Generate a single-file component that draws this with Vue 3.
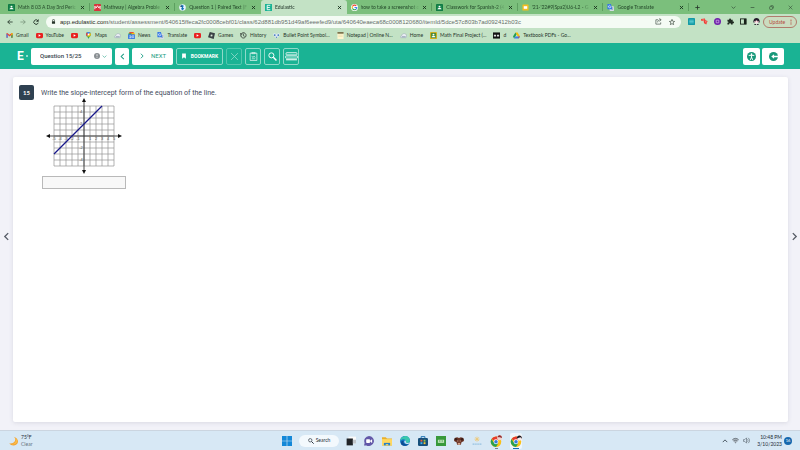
<script setup>
import { ref } from 'vue'

const icons = {
  classroom: '<rect width="16" height="16" rx="1" fill="#0f7a45"/><rect x="2" y="2" width="12" height="12" fill="#18864b"/><circle cx="8" cy="6" r="2.2" fill="#fff"/><path d="M3.5 12c0-4 9-4 9 0z" fill="#fff"/>',
  classroomGold: '<rect width="16" height="16" rx="1" fill="#e0b31c"/><rect x="2" y="2" width="12" height="12" fill="#4b8b3b"/><circle cx="8" cy="6" r="2.2" fill="#fff"/><path d="M3.5 12c0-4 9-4 9 0z" fill="#fff"/>',
  mathway: '<rect width="16" height="16" rx="2" fill="#d8343c"/><path d="M2 12V5l3 4 3-5 3 5 3-4v7" fill="none" stroke="#fff" stroke-width="2"/>',
  paired: '<circle cx="8" cy="8" r="7.500" fill="#e9f5ff"/><path d="M5 1l6 3-2 4 3 3-5 4-2-5 2-3z" fill="#1773b9"/><circle cx="5" cy="5" r="2" fill="#174a74"/>',
  edulastic: '<rect width="16" height="16" fill="#1ab394"/><path d="M12 3H5v10h7M5 8h6" fill="none" stroke="#fff" stroke-width="2"/>',
  google: '<circle cx="8" cy="8" r="8" fill="#fff"/><g fill="none" stroke-width="2.500"><path d="M12 4.300A5.300 5.300 0 0 0 3.400 5.500" stroke="#ea4335"/><path d="M3.400 5.500a5.300 5.300 0 0 0 0 5" stroke="#fbbc05"/><path d="M3.400 10.500a5.300 5.300 0 0 0 8.300 1.300" stroke="#34a853"/><path d="M11.700 11.800A5 5 0 0 0 13.300 8H8" stroke="#4285f4"/></g>',
  slides: '<rect x="1" y="1" width="14" height="14" rx="1" fill="#f5bd1f"/><rect x="4" y="5" width="8" height="6" fill="#fff"/>',
  translate: '<rect x="6" y="5" width="10" height="11" rx="1" fill="#d5dde8"/><path d="M9 9h6M12 8c0 3-2 4-3 5M10 10c1 2 3 3 4 3" stroke="#607d8b" fill="none"/><path d="M1 0h8l3 12H1z" fill="#3577e5"/><path d="M8 4.500A2.700 2.700 0 1 0 8.500 6.500H6" stroke="#fff" fill="none" stroke-width="1.400"/>',
  gmail: '<path d="M1 3v10h3V7l4 3 4-3v6h3V3l-2-1-5 4-5-4z" fill="#ea4335"/><path d="M1 4v9h3V6z" fill="#4285f4"/><path d="M15 4v9h-3V6z" fill="#34a853"/><path d="M12 3l3-1v4l-3 2z" fill="#fbbc04"/>',
  youtube: '<rect y="2" width="16" height="12" rx="3" fill="#e8201f"/><path d="M6 5l5 3-5 3z" fill="#fff"/>',
  maps: '<path d="M8 0a5.500 5.500 0 0 0-5.500 5.500C2.500 10 7 11 8 16c1-5 5.500-6 5.500-10.500A5.500 5.500 0 0 0 8 0z" fill="#34a853"/><path d="M8 0a5.500 5.500 0 0 1 5 3L4 10C2 7 1 0 8 0z" fill="#4285f4"/><path d="M2.500 6c0-3 1-4 2-5l3 4-4 4z" fill="#ea4335"/><path d="M4 10l6-7 3 0c1 3 0 5-2 7z" fill="#fbbc04"/><circle cx="8" cy="5.500" r="2" fill="#fff"/>',
  cloud: '<path d="M2 13c-2-3 0-5 2-5 1-5 8-6 10-2 2 3 1 7-1 7z" fill="#e9edf3" stroke="#8e9cab"/><path d="M4 11h9" stroke="#8293a8" stroke-width="2"/>',
  news: '<rect x="3" y="0" width="10" height="8" fill="#ea4335"/><rect x="1" y="3" width="8" height="8" fill="#34a853"/><rect x="8" y="2" width="7" height="8" fill="#fbbc04"/><rect y="5" width="16" height="11" rx="1" fill="#3f7de0"/><path d="M3 9h4v4H3M9 9h5M9 12h5" stroke="#fff" fill="none" stroke-width="1.500"/>',
  roblox: '<path d="M4 0l12 3-3 13-13-4z" fill="#3b4145"/><path d="M6.500 5.500l4 1-1 4-4-1z" fill="#d9e8d9"/>',
  history: '<path d="M2.500 5A6 6 0 1 1 2 9" fill="none" stroke="#333a35" stroke-width="2"/><path d="M0 3l1 5 4-2zM8 4v5l3 1" fill="none" stroke="#333a35" stroke-width="1.500"/>',
  bullet: '<path d="M1 4c3-3 5 1 7 1s4-4 7-1c2 4-4 8-7 10C5 12-1 8 1 4z" fill="#dfeaf7"/><circle cx="4" cy="7" r="2" fill="#3d75b9"/><circle cx="12" cy="7" r="2" fill="#3d75b9"/><path d="M6 11h4l-2 3z" fill="#3d75b9"/>',
  notepad: '<rect x="1" y="1" width="14" height="15" fill="#fff6cf"/><rect x="1" y="0" width="14" height="4" fill="#7c744f"/><path d="M3 7h10M3 10h10" stroke="#ddd09a"/>',
  black: '<rect y="1" width="16" height="14" fill="#111"/><path d="M2 6h5v4H2zM9 6h5v4H9z" fill="#ddd"/>',
  drive: '<path d="M5.500 1h5l5.500 9h-5z" fill="#fbbc04"/><path d="M5.500 1L0 10l2.500 5L8 5.500z" fill="#229c54"/><path d="M5 10h11l-3 5H2.500z" fill="#3f7de8"/><path d="M13 15l3-5h-4z" fill="#e34133"/>',
  windows: '<path d="M0 0h7.500v7.500H0zM8.500 0H16v7.500H8.500zM0 8.500h7.500V16H0zM8.500 8.500H16V16H8.500z" fill="#1488d8"/>',
  taskview: '<rect x="4" y="1" width="12" height="11" fill="#fafafa"/><rect x="1" y="4" width="10" height="11" fill="#202327"/><path d="M11 12h5V6h-5z" fill="#c0c5ca"/>',
  chat: '<path d="M8 0a8 8 0 1 1-4 15H0l1-4A8 8 0 0 1 8 0z" fill="#6258a8"/><rect x="3.500" y="5" width="6" height="6" rx="1" fill="#fff"/><path d="M10 7l3-2v6l-3-2z" fill="#fff"/>',
  folder: '<path d="M0 2h6l2 2h8v11H0z" fill="#eab02b"/><path d="M0 5h16v10H0z" fill="#ffd861"/><path d="M3 11h10v4H3z" fill="#2580c8"/><path d="M6 13h4v2H6z" fill="#ffd861"/>',
  edge: '<circle cx="8" cy="8" r="8" fill="#1478c6"/><path d="M0 8C1-2 15-3 16 7c0 4-5 5-7 3 2-5-5-7-9-2z" fill="#39c7ae"/><path d="M6 8c-2 3 1 7 8 5-3 3-9 4-12 0C1 9 3 7 6 8z" fill="#0c4c92"/><path d="M7 8c2-2 3 0 2 2 2 2 5 1 7 0l-1 2c-4 2-9 0-8-4z" fill="#d8ebf7"/>',
  store: '<path d="M5 4V1h6v3" fill="none" stroke="#176eb0" stroke-width="1.500"/><rect y="3" width="16" height="13" rx="2" fill="#174f7b"/><path d="M4 6h3v3H4z" fill="#f15c3d"/><path d="M9 6h3v3H9z" fill="#8fc642"/><path d="M4 10h3v3H4z" fill="#40b4ed"/><path d="M9 10h3v3H9z" fill="#fbc52e"/>',
  xbox: '<rect width="16" height="16" fill="#38993b"/><path d="M3 6h10v5H3z" fill="#bde3b7"/><path d="M5 8h2M9 8h2" stroke="#38993b" stroke-width="1.500"/>',
  bear: '<path d="M1 3l4-1 3 1 3-1 4 1 1 5-4 2-1 4H5l-1-4-4-2z" fill="#6d3526"/><circle cx="3" cy="5" r="2" fill="#3b1d18"/><circle cx="13" cy="5" r="2" fill="#3b1d18"/><path d="M5 8h2M9 8h2" stroke="#ead2c2"/><path d="M6 11h4v3H6z" fill="#d5a68d"/>',
  sun: '<path d="M8 1v8M4 5h8M5 2l6 6M11 2L5 8" stroke="#efc66e" stroke-width="1.200"/><path d="M1 13h14" stroke="#8ebcdc" stroke-width="2" stroke-dasharray="2 1"/>',
  chrome: '<circle cx="8" cy="9" r="7" fill="#fbc116"/><path d="M8 9L2 5.400A7 7 0 0 1 14.500 6.500H8z" fill="#e63c2f"/><path d="M2 5.400A7 7 0 0 0 8 16l3-5-3-2-3 1z" fill="#2aa050"/><circle cx="8" cy="9" r="3.200" fill="#fff"/><circle cx="8" cy="9" r="2.400" fill="#367bdf"/><circle cx="13" cy="3.500" r="3.500" fill="#f2d3cc"/><path d="M10 3c1-4 6-3 6 1l-3-1z" fill="#8f2b30"/>',
  chromeDark: '<circle cx="8" cy="9" r="7" fill="#fbc116"/><path d="M8 9L2 5.400A7 7 0 0 1 14.500 6.500H8z" fill="#e63c2f"/><path d="M2 5.400A7 7 0 0 0 8 16l3-5-3-2-3 1z" fill="#2aa050"/><circle cx="8" cy="9" r="3.200" fill="#fff"/><circle cx="8" cy="9" r="2.400" fill="#367bdf"/><circle cx="13" cy="4" r="3.500" fill="#f5e8e8"/><path d="M9 5c0-6 7-6 7 0l-2-2-3 1z" fill="#17151c"/>',
  close: '<path d="M3 3l10 10M13 3L3 13" stroke="currentColor" stroke-width="2.800"/>',
  thinClose: '<path d="M2 2l12 12M14 2L2 14" stroke="currentColor" stroke-width="1.500"/>',
  plus: '<path d="M8 1v14M1 8h14" stroke="currentColor" stroke-width="2.600"/>',
  down: '<path d="M2 5l6 6 6-6" fill="none" stroke="currentColor" stroke-width="1.800"/>',
  up: '<path d="M2 11l6-6 6 6" fill="none" stroke="currentColor" stroke-width="2"/>',
  left: '<path d="M11 2L5 8l6 6" fill="none" stroke="currentColor" stroke-width="2.400"/>',
  right: '<path d="M5 2l6 6-6 6" fill="none" stroke="currentColor" stroke-width="2.400"/>',
  minimize: '<path d="M2 8h12" stroke="currentColor" stroke-width="1.800"/>',
  restore: '<rect x="2" y="5" width="9" height="9" rx="2" fill="none" stroke="currentColor" stroke-width="1.600"/><path d="M5 2h6q3 0 3 3v6" fill="none" stroke="currentColor" stroke-width="1.600"/>',
  back: '<path d="M15 8H2M8 2L2 8l6 6" fill="none" stroke="currentColor" stroke-width="2.200"/>',
  forward: '<path d="M1 8h13M8 2l6 6-6 6" fill="none" stroke="currentColor" stroke-width="1.800"/>',
  reload: '<path d="M13 4.500A6 6 0 1 0 14 10" fill="none" stroke="currentColor" stroke-width="2.400"/><path d="M15 0v7H8z" fill="currentColor"/>',
  lock: '<rect x="3" y="7" width="10" height="8" rx="1" fill="currentColor"/><path d="M5 7V4a3 3 0 0 1 6 0v3" fill="none" stroke="currentColor" stroke-width="2"/>',
  share: '<path d="M7 4H2v10h11v-4M6 10c0-4 3-6 7-6M10 1l4 3-4 4" fill="none" stroke="currentColor" stroke-width="1.300"/>',
  star: '<path d="M8 1l2 5 5 .5-4 3.500 1.300 5L8 12.300 3.700 15 5 10 1 6.500 6 6z" fill="none" stroke="currentColor" stroke-width="1.600"/>',
  extTeal: '<rect width="16" height="16" rx="1" fill="#149aa5"/><path d="M3 5h10M3 8h10M3 11h10" stroke="#73dce0" stroke-width="1.500"/>',
  extRed: '<path d="M0 2l9-1 1 4 5 2-3 8-5-3-1-6-5 1z" fill="#ed3b35"/><path d="M3 4h5M5 4v4M9 8h3l-1 4" stroke="#ffb8ac" fill="none"/>',
  extPurple: '<circle cx="8" cy="8" r="8" fill="#6e20aa"/><path d="M5 5h6v6H5z" fill="none" stroke="#dfbff2" stroke-width="1.500"/>',
  puzzle: '<path d="M1 4h4c-1-4 5-4 4 0h4v4c4-1 4 5 0 4v3H9c1-4-5-4-4 0H1v-4c3 1 3-4 0-3z" fill="#202b22"/>',
  panel: '<rect x="1" y="2" width="13" height="12" fill="none" stroke="#172019" stroke-width="2"/><path d="M9 2h5v12H9z" fill="#172019"/>',
  avatar: '<path d="M1 10C-1-3 17-3 15 10z" fill="#231a29"/><path d="M3 7c2 1 4-2 5-2s3 3 5 2c1 8-11 8-10 0z" fill="#fbe9ec"/><circle cx="5.500" cy="8.500" r="1" fill="#a02f45"/><circle cx="10.500" cy="8.500" r="1" fill="#a02f45"/><path d="M3 16c0-3 3-3 5-1 2-2 5-2 5 1z" fill="#1d1b25"/><path d="M6 13h4l-2 3z" fill="#fbe9ec"/>',
  dots: '<circle cx="8" cy="3" r="1.600" fill="currentColor"/><circle cx="8" cy="8" r="1.600" fill="currentColor"/><circle cx="8" cy="13" r="1.600" fill="currentColor"/>',
  info: '<circle cx="8" cy="8" r="8" fill="#898e92"/><path d="M8 3v6M8 11v2" stroke="#fff" stroke-width="2"/>',
  ribbon: '<path d="M3 1h10v14l-5-4-5 4z" fill="currentColor"/>',
  clipboard: '<path d="M2 2h12v13H2z" fill="none" stroke="currentColor" stroke-width="1.200"/><path d="M5 1h6v2H5zM5 7l2 3 2-3 2 3M5 12h6" fill="none" stroke="currentColor"/>',
  magnify: '<circle cx="6" cy="6" r="4.500" fill="none" stroke="currentColor" stroke-width="1.700"/><path d="M9.500 9.500L15 15" stroke="currentColor" stroke-width="2.600"/>',
  lines: '<rect x="2" y="1" width="20" height="4" rx="1" fill="none" stroke="currentColor" stroke-width="1.500"/><rect x="1" y="7" width="22" height="4" rx="1" fill="none" stroke="currentColor" stroke-width="1.500"/><path d="M2 14h20" stroke="currentColor" stroke-width="2"/>',
  person: '<circle cx="8" cy="8" r="8" fill="#169879"/><circle cx="8" cy="3.800" r="1.500" fill="#fff"/><path d="M3 6l10 0M8 6v4M8 9l-2 5M8 9l2 5" stroke="#fff" stroke-width="1.700"/>',
  exit: '<circle cx="8" cy="8" r="8" fill="#169879"/><path d="M4 8l5-4v2.500h7v3H9V12z" fill="#fff"/>',
  moon: '<path d="M9 1c5 3 3 12-7 11 4 5 13 4 14-3 0-4-3-7-7-8z" fill="#f2a22e"/><path d="M11 3c4 5-1 10-6 10 5 2 10-1 10-5 0-2-2-4-4-5z" fill="#f9bc4c"/>',
  wifi: '<path d="M0 6c5-5 11-5 16 0l-8 9z" fill="#a9b3bc"/><path d="M1 6c4-4 10-4 14 0M4 9c3-2 5-2 8 0M7 13h2" fill="none" stroke="#4e5961" stroke-width="1.300"/>',
  sound: '<path d="M1 6h3l4-4v12l-4-4H1zM10 5c2 2 2 4 0 6M12 2c4 4 4 8 0 12" fill="none" stroke="#4e5961" stroke-width="1.300"/>'
}

const tabs = [
  { icon: 'classroom', text: 'Math 8 03 A Day 3rd Peric' },
  { icon: 'mathway', text: 'Mathway | Algebra Proble' },
  { icon: 'paired', text: 'Question 1 | Paired Text (F' },
  { icon: 'edulastic', text: 'Edulastic', active: true },
  { icon: 'google', text: 'how to take a screenshot o' },
  { icon: 'classroom', text: 'Classwork for Spanish-2 (4' },
  { icon: 'slides', text: "'21-'22#9(Spa2)U6-L2 - G" },
  { icon: 'translate', text: 'Google Translate' }
]
const bookmarks = [
  ['gmail', 'Gmail'], ['youtube', 'YouTube'], ['youtube', ''], ['maps', 'Maps'], ['cloud', ''],
  ['news', 'News'], ['translate', 'Translate'], ['youtube', ''], ['roblox', 'Games'], ['history', 'History'],
  ['bullet', 'Bullet Point Symbol...'], ['notepad', 'Notepad | Online N...'], ['cloud', 'Home'],
  ['classroomGold', 'Math Final Project (...'], ['black', 'd'], ['drive', 'Textbook PDFs - Go...']
]
const windowButtons = [['down', 'Tab search'], ['minimize', 'Minimize'], ['restore', 'Restore'], ['thinClose', 'Close window']]
const extensions = ['extTeal', 'extRed', 'extPurple', 'puzzle', 'panel', 'avatar']
const tools = [['thinClose', 'Cross out'], ['clipboard', 'Calculator'], ['magnify', 'Magnify'], ['lines', 'Line reader']]
const apps = ['taskview', 'chat', 'folder', 'edge', 'store', 'xbox', 'bear', 'sun', 'chrome', 'chromeDark']

const question = ref('15')
const answer = ref('')

const steps = [-5, -4, -3, -2, -1, 0, 1, 2, 3, 4, 5]
const xLabels = steps.filter(n => n !== 0)
const yLabels = [4, 2, -2, -4]
</script>

<template>
  <div class="screen">
    <div class="tabstrip">
      <div class="tabs">
        <div v-for="t in tabs" :key="t.text" class="tab" :class="{ active: t.active }">
          <svg class="ico i7" viewBox="0 0 16 16" v-html="icons[t.icon]" />
          <span class="tab-text">{{ t.text }}</span>
          <button class="plain" aria-label="Close tab"><svg class="ico i5" viewBox="0 0 16 16" v-html="icons.close" /></button>
        </div>
      </div>
      <button class="plain new-tab" aria-label="New tab"><svg class="ico i5" viewBox="0 0 16 16" v-html="icons.plus" /></button>
      <div class="window-buttons">
        <button v-for="w in windowButtons" :key="w[1]" class="plain" :aria-label="w[1]"><svg class="ico i5" viewBox="0 0 16 16" v-html="icons[w[0]]" /></button>
      </div>
    </div>

    <div class="toolbar">
      <button class="plain" aria-label="Back"><svg class="ico i6" viewBox="0 0 16 16" v-html="icons.back" /></button>
      <button class="plain dim" aria-label="Forward"><svg class="ico i6" viewBox="0 0 16 16" v-html="icons.forward" /></button>
      <button class="plain" aria-label="Reload"><svg class="ico i6" viewBox="0 0 16 16" v-html="icons.reload" /></button>
      <div class="address">
        <svg class="ico i5" viewBox="0 0 16 16" v-html="icons.lock" />
        <a class="url" href="#"><b>app.edulastic.com</b>/student/assessment/640615ffeca2fc0008cebf01/class/62d881db951d49af6eeefed9/uta/640640eaeca68c0008120680/itemId/5dce57c803b7ad092412b03c</a>
        <button class="plain" aria-label="Share"><svg class="ico i7" viewBox="0 0 16 16" v-html="icons.share" /></button>
        <button class="plain" aria-label="Bookmark this tab"><svg class="ico i6" viewBox="0 0 16 16" v-html="icons.star" /></button>
      </div>
      <div class="extensions">
        <button v-for="e in extensions" :key="e" class="plain" :aria-label="e"><svg class="ico i7" viewBox="0 0 16 16" v-html="icons[e]" /></button>
      </div>
      <button class="update">Update<svg class="ico i6" viewBox="0 0 16 16" v-html="icons.dots" /></button>
    </div>

    <nav class="bookmarks">
      <a v-for="(b, i) in bookmarks" :key="i" href="#" :aria-label="b[1] || b[0]">
        <svg class="ico i7" viewBox="0 0 16 16" v-html="icons[b[0]]" />
        <span v-if="b[1]">{{ b[1] }}</span>
      </a>
    </nav>

    <header class="header">
      <div class="logo"><b>E</b><i></i></div>
      <label class="question-box">
        <select v-model="question" aria-label="Question"><option value="15">Question 15/25</option></select>
        <svg class="ico i6" viewBox="0 0 16 16" v-html="icons.info" />
        <svg class="ico i5" viewBox="0 0 16 16" v-html="icons.down" />
      </label>
      <button class="white prev" aria-label="Previous"><svg class="ico i7" viewBox="0 0 16 16" v-html="icons.left" /></button>
      <button class="white next"><svg class="ico i6" viewBox="0 0 16 16" v-html="icons.right" />NEXT</button>
      <button class="outline bookmark"><svg class="ico i6" viewBox="0 0 16 16" v-html="icons.ribbon" />BOOKMARK</button>
      <button v-for="(t, i) in tools" :key="t[1]" class="outline tool" :class="{ faded: i === 0 }" :aria-label="t[1]">
        <svg class="ico" :class="t[0] === 'lines' ? 'wide' : 'i9'" :viewBox="t[0] === 'lines' ? '0 0 24 16' : '0 0 16 16'" v-html="icons[t[0]]" />
      </button>
      <div class="header-right">
        <button class="white access" aria-label="Accessibility"><svg class="ico i9" viewBox="0 0 16 16" v-html="icons.person" /></button>
        <button class="white exit" aria-label="Exit"><svg class="ico i9" viewBox="0 0 16 16" v-html="icons.exit" /></button>
      </div>
    </header>

    <main class="main">
      <button class="plain side" aria-label="Previous question"><svg class="ico i9" viewBox="0 0 16 16" v-html="icons.left" /></button>
      <section class="card">
        <span class="number">15</span>
        <div class="content">
          <label for="answer">Write the slope-intercept form of the equation of the line.</label>
          <svg class="graph" viewBox="0 0 84 78" role="img" aria-label="Graph of a line">
            <g stroke="#929292" stroke-width="0.700">
              <path v-for="n in steps" :key="'v' + n" :d="`M${43 + n * 6} 9V69`" />
              <path v-for="n in steps" :key="'h' + n" :d="`M13 ${39 + n * 6}H73`" />
            </g>
            <path d="M8 39H78M43 5V74" stroke="#333" stroke-width="0.900" />
            <path d="M5 39l4-2v4zM81 39l-4-2v4zM43 1l-2 4h4zM43 77l-2-4h4z" fill="#111" />
            <g class="ticks">
              <text v-for="n in xLabels" :key="'x' + n" :x="43 + n * 6" y="43">{{ n }}</text>
              <text v-for="n in yLabels" :key="'y' + n" x="40" :y="40 - n * 6">{{ n }}</text>
            </g>
            <path d="M13 57L61 9" stroke="#17178a" stroke-width="1.200" />
          </svg>
          <input id="answer" v-model="answer" class="answer" type="text" />
        </div>
      </section>
      <button class="plain side" aria-label="Next question"><svg class="ico i9" viewBox="0 0 16 16" v-html="icons.right" /></button>
    </main>

    <footer class="taskbar">
      <div class="weather">
        <svg class="ico i10" viewBox="0 0 16 16" v-html="icons.moon" />
        <div><div>75°F</div><div class="muted">Clear</div></div>
      </div>
      <div class="dock">
        <button class="plain" aria-label="Start"><svg class="ico i10" viewBox="0 0 16 16" v-html="icons.windows" /></button>
        <button class="search"><svg class="ico i6" viewBox="0 0 16 16" v-html="icons.magnify" />Search</button>
        <button v-for="a in apps" :key="a" class="plain app" :class="a" :aria-label="a"><svg class="ico i10" viewBox="0 0 16 16" v-html="icons[a]" /></button>
      </div>
      <div class="tray">
        <svg class="ico i6" viewBox="0 0 16 16" v-html="icons.up" />
        <svg class="ico i7" viewBox="0 0 16 16" v-html="icons.wifi" />
        <svg class="ico i7" viewBox="0 0 16 16" v-html="icons.sound" />
        <div class="clock"><div>10:48 PM</div><div>3/10/2023</div></div>
        <span class="badge">16</span>
      </div>
    </footer>
  </div>
</template>

<style>
body { margin: 0; }
</style>

<style scoped>
* { box-sizing: border-box; }
.screen {
  min-height: 100vh;
  display: flex;
  flex-direction: column;
  font: 5px/8px Lato, "Open Sans", sans-serif;
  color: #26352a;
  background: #f2f2f8;
}
button, input, select { font: inherit; color: inherit; margin: 0; }
.ico { display: block; flex: none; }
.i5 { width: 5px; height: 5px; }
.i6 { width: 6px; height: 6px; }
.i7 { width: 7px; height: 7px; }
.i9 { width: 9px; height: 9px; }
.i10 { width: 10px; height: 10px; }
.wide { width: 13px; height: 9px; }
.plain { border: 0; background: none; padding: 0; display: flex; align-items: center; justify-content: center; }
a { color: inherit; text-decoration: none; }

.tabstrip { display: flex; align-items: center; height: 14px; background: #7bbf7c; padding-left: 4px; }
.tabs { display: flex; flex: 1; align-self: stretch; min-width: 0; }
.tab { flex: 1 1 0; min-width: 0; display: flex; align-items: center; gap: 3px; padding: 0 5px 0 4px; color: #24492a; position: relative; }
.tab::after { content: ""; position: absolute; right: 0; width: 1px; height: 8px; background: #5d9f60; }
.tab:nth-child(3)::after { display: none; }
.tab.active { background: #c3e2c5; border-radius: 3px 3px 0 0; color: #22352a; }
.tab.active::after { display: none; }
.tab-text { flex: 1; min-width: 0; overflow: hidden; white-space: nowrap; mask-image: linear-gradient(to right, #000 85%, transparent); }
.tab button { color: #17301b; }
.new-tab { width: 17px; }
.window-buttons { display: flex; gap: 14px; padding: 0 7px 0 25px; }

.toolbar { display: flex; align-items: center; gap: 7px; height: 15px; padding: 0 3px 0 7px; background: #c3e2c5; }
.dim { color: #6d8770; }
.address { flex: 1; min-width: 0; height: 12px; border-radius: 6px; background: #f4fbf4; display: flex; align-items: center; gap: 7px; padding: 0 6px 0 5px; }
.url { flex: 1; min-width: 0; overflow: hidden; white-space: nowrap; font-family: "Liberation Sans", sans-serif; font-size: 6px; color: #66706a; }
.url b { font-weight: 400; color: #1d2a20; }
.address > svg { margin-right: -3px; }
.extensions { display: flex; gap: 6px; }
.update { display: flex; align-items: center; justify-content: space-between; width: 34px; height: 12px; padding: 0 2px 0 5px; margin-left: -4px; border: 1px solid #b07c6c; border-radius: 6px; background: #cbdcc0; color: #b54a3c; }

.bookmarks { display: flex; align-items: center; gap: 7px; height: 14px; padding: 0 6px 2px; background: #c3e2c5; overflow: hidden; }
.bookmarks a { display: flex; align-items: center; gap: 3px; white-space: nowrap; }

.header { display: flex; align-items: center; gap: 3px; height: 26px; padding: 0 16px 0 17px; background: #1ab394; color: #fff; font-family: Roboto, sans-serif; }
.logo { display: flex; align-items: center; gap: 2px; width: 11px; font-size: 12px; line-height: 12px; }
.logo i { width: 2px; height: 2px; border-radius: 1px; background: #b9ebdf; }
.white, .outline { display: flex; align-items: center; justify-content: center; height: 17px; padding: 0; border-radius: 2px; }
.white { border: 0; background: #fff; color: #1a9d83; }
.question-box { display: flex; align-items: center; gap: 2px; width: 81px; height: 17px; padding: 0 5px 0 9px; border-radius: 2px; background: #fff; color: #1a9d83; }
.question-box select { flex: 1; min-width: 0; appearance: none; border: 0; padding: 0; background: none; color: #34424b; font-size: 6px; font-weight: 500; }
.prev { width: 14px; }
.next { width: 41px; gap: 6px; font-size: 6px; }
.outline { border: 1px solid #8fd9c9; background: transparent; color: #fff; }
.bookmark { width: 47px; gap: 4px; font-weight: 700; }
.tool { width: 16px; }
.faded { opacity: 0.5; }
.header-right { display: flex; gap: 2px; margin-left: auto; }
.access { width: 17px; }
.exit { width: 22px; }

.main { flex: 1; display: grid; grid-template-columns: 13px 1fr 12px; padding: 8px 0; }
.side { padding-bottom: 26px; color: #565c66; }
.card { display: flex; align-items: flex-start; gap: 7px; padding: 8px 6px; background: #fff; border-radius: 2px; box-shadow: 0 1px 4px #d9d9e2; }
.number { width: 15px; height: 15px; border-radius: 2px; background: #2f4151; color: #fff; font-size: 6px; font-weight: 700; line-height: 15px; text-align: center; }
.content { display: flex; flex-direction: column; align-items: flex-start; font: 7px/11px Roboto, sans-serif; color: #434b5d; padding-top: 3px; }
.graph { width: 84px; height: 78px; margin-top: -2px; }
.ticks { font: 4px "Liberation Sans", sans-serif; fill: #555; text-anchor: middle; }
.answer { width: 84px; height: 13px; margin: 1px 0 0 1px; padding: 0 3px; border: 1px solid #b9b9b9; background: #f8f8f8; }

.taskbar { display: grid; grid-template-columns: 1fr auto 1fr; align-items: center; height: 20px; padding: 0 8px; border-top: 1px solid #cbd5e0; background: #d7e8f5; color: #222c36; line-height: 7px; }
.weather { display: flex; align-items: center; gap: 3px; }
.muted { color: #66727d; }
.dock { display: flex; align-items: center; gap: 8px; padding-left: 4px; }
.search { display: flex; align-items: center; justify-content: center; gap: 2px; width: 40px; height: 12px; padding: 0; margin: 0 -1px; border: 0; border-radius: 6px; background: #f3f9fd; }
.app { position: relative; height: 16px; }
.chrome, .chromeDark { width: 12px; }
.chrome svg, .chromeDark svg { width: 12px; height: 12px; }
.chromeDark { background: #edf5fb; border-radius: 2px; }
.chrome::after, .chromeDark::after { content: ""; position: absolute; bottom: 0; width: 3px; height: 1px; background: #77838e; }
.chromeDark::after { width: 6px; background: #176cae; }
.tray { display: flex; align-items: center; justify-content: flex-end; gap: 4px; }
.clock { text-align: right; margin-left: 3px; }
.badge { width: 8px; height: 8px; margin-left: -2px; border-radius: 4px; background: #1568ae; color: #fff; text-align: center; font-size: 4px; line-height: 8px; }
</style>
